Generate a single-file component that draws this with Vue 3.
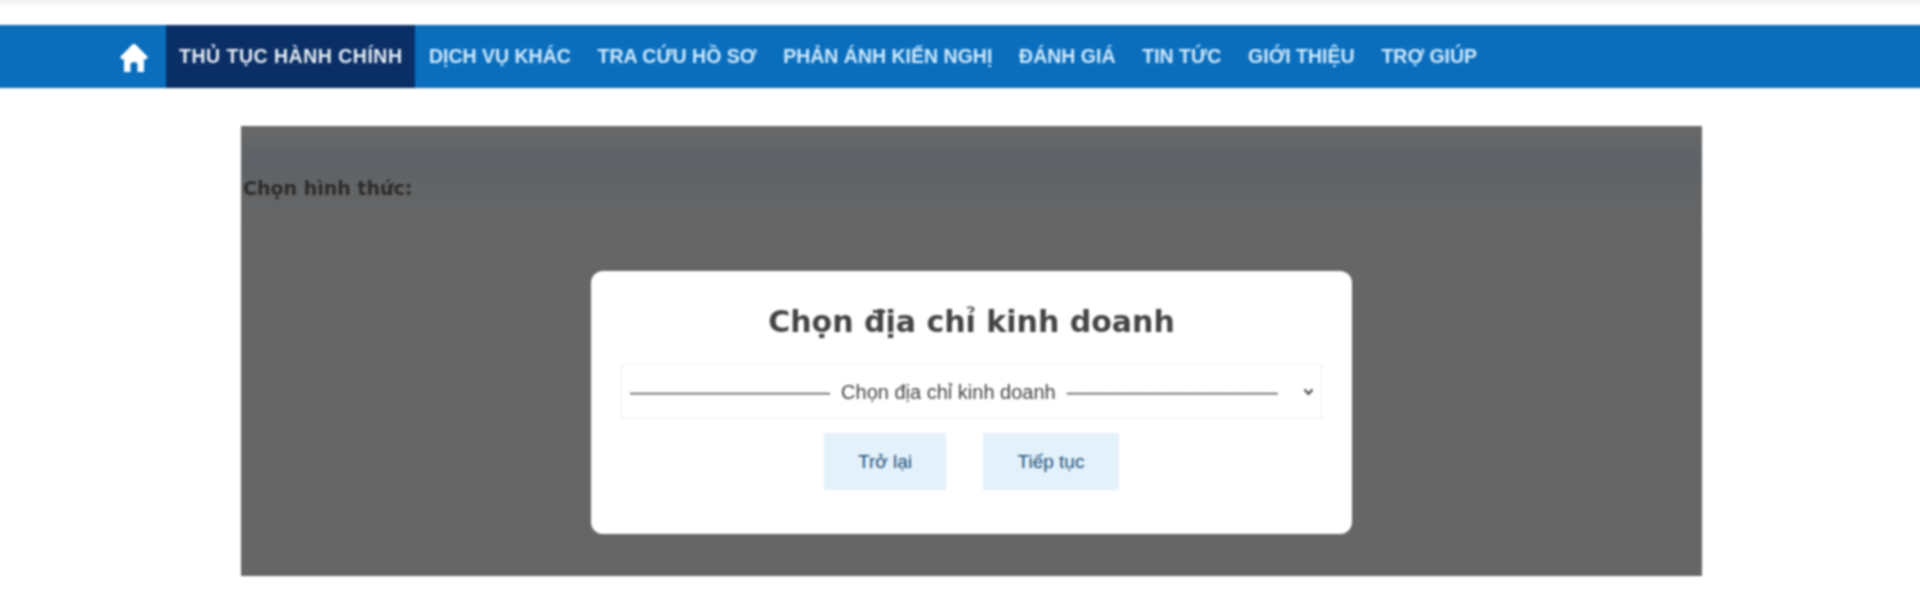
<template>
  <div class="page">
    <div class="topstrip"></div>

    <nav class="navbar">
      <a class="home" href="#">
        <svg width="28" height="30" viewBox="0 0 28 30" fill="#fff">
          <path d="M14 1 C12 1 11 3 9 5 L0 14 L2.5 17 L4 15.8 L4 29 L10.5 29 L10.5 21 C10.5 18.5 17.5 18.5 17.5 21 L17.5 29 L24 29 L24 15.8 L25.5 17 L28 14 L19 5 C17 3 16 1 14 1 Z" />
        </svg>
      </a>
      <a
        v-for="(item, i) in menu"
        :key="item"
        class="nav-item"
        :class="{ active: i === 0 }"
        href="#"
      >{{ item }}</a>
    </nav>

    <main class="panel">
      <p class="panel-label">Chọn hình thức:</p>
      <div class="modal">
        <h2 class="modal-title">Chọn địa chỉ kinh doanh</h2>
        <select class="address">
          <option>——————————&nbsp; Chọn địa chỉ kinh doanh &nbsp;——————————–</option>
        </select>
        <div class="actions">
          <button class="btn back">Trở lại</button>
          <button class="btn next">Tiếp tục</button>
        </div>
      </div>
    </main>
  </div>
</template>

<script setup>
const menu = [
  'THỦ TỤC HÀNH CHÍNH',
  'DỊCH VỤ KHÁC',
  'TRA CỨU HỒ SƠ',
  'PHẢN ÁNH KIẾN NGHỊ',
  'ĐÁNH GIÁ',
  'TIN TỨC',
  'GIỚI THIỆU',
  'TRỢ GIÚP'
]
</script>

<style>
html, body {
  background: #fff;
  overflow: hidden;
}
</style>

<style scoped>
/* page is 6px wider each side so the blur doesn't fade the navbar ends */
.page {
  width: 1932px;
  height: 604px;
  margin-left: -6px;
  overflow: hidden;
  font-family: "Liberation Sans", Arial, sans-serif;
  filter: blur(1.2px);
}

.topstrip {
  height: 25px;
  background: linear-gradient(#eeeeee 0, #f6f6f6 3px, #ffffff 7px);
}

.navbar {
  height: 63px;
  padding-left: 122px;
  display: flex;
  align-items: stretch;
  background: #0a6ebd;
}

.home {
  width: 50px;
  padding-left: 4px;
  padding-top: 3px;
  box-sizing: border-box;
  display: flex;
  align-items: center;
}

.nav-item {
  display: flex;
  align-items: center;
  padding: 0 13.4px;
  font-size: 19.5px;
  font-weight: 700;
  color: #cfeafc;
  text-decoration: none;
  white-space: nowrap;
}

.nav-item.active {
  padding: 0 13px;
  letter-spacing: 0.5px;
  background: #0a2f66;
  color: #e8eef6;
}

.panel {
  width: 1461px;
  height: 450px;
  margin: 38px 0 0 247px;
  background: linear-gradient(#686868 0, #5e6267 36px, #646566 75px, #666666 110px);
  display: flex;
  flex-direction: column;
  align-items: center;
}

.panel-label {
  align-self: flex-start;
  height: 21px;
  margin: 52px 0 0 2px;
  font-family: "DejaVu Sans", sans-serif;
  font-size: 19px;
  line-height: 21px;
  font-weight: 700;
  color: #2b2b2b;
}

.modal {
  width: 761px;
  height: 263px;
  margin-top: 72px;
  padding: 33px 30px 0;
  box-sizing: border-box;
  background: #fff;
  border-radius: 12px;
  display: flex;
  flex-direction: column;
  align-items: center;
}

.modal-title {
  margin: 0 0 24px;
  font-family: "DejaVu Sans", sans-serif;
  font-size: 30px;
  font-weight: 700;
  line-height: 36px;
  color: #444;
}

.address {
  width: 100%;
  height: 55px;
  padding: 0 24px 0 8px;
  border: 1px solid #eee;
  appearance: none;
  background: #fff url("data:image/svg+xml,%3Csvg xmlns='http://www.w3.org/2000/svg' width='11' height='8' viewBox='0 0 11 8'%3E%3Cpath d='M1.5 1.5 L5.5 6 L9.5 1.5' fill='none' stroke='%23444' stroke-width='2'/%3E%3C/svg%3E") no-repeat right 7px center;
  font-family: "Liberation Sans", Arial, sans-serif;
  font-size: 20px;
  color: #444;
}

.actions {
  display: flex;
  gap: 37px;
  margin-top: 14px;
}

.btn {
  height: 57px;
  border: none;
  background: #e3f1fb;
  font-family: "Liberation Sans", Arial, sans-serif;
  font-size: 19px;
  color: #1d4f78;
}

.back { width: 122px; }
.next { width: 136px; }
</style>
